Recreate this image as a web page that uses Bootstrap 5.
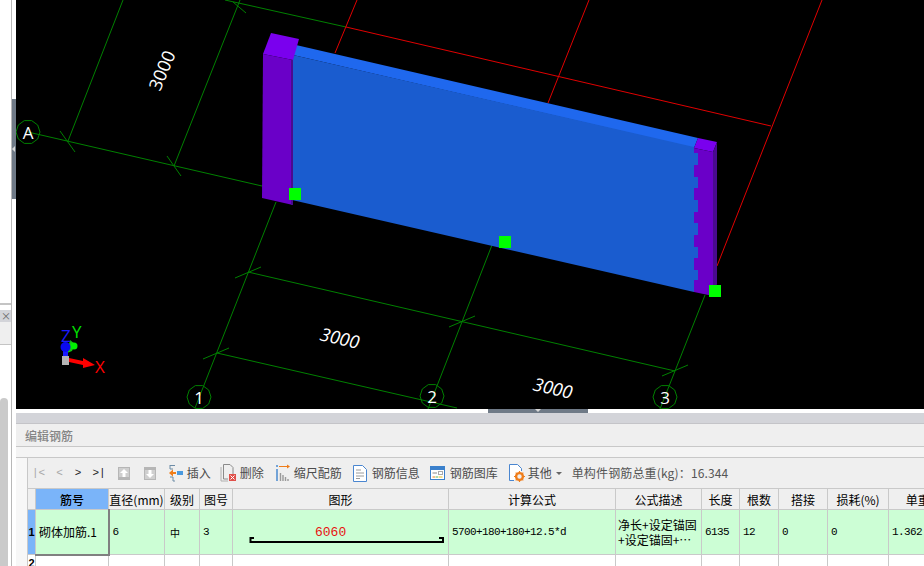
<!DOCTYPE html>
<html lang="zh">
<head>
  <meta charset="UTF-8">
  <title>编辑钢筋</title>
  <link href="https://cdn.jsdelivr.net/npm/bootstrap@5.3.0/dist/css/bootstrap.min.css" rel="stylesheet">
  <style>
    html, body { height: 100%; }
    body {
      width: 924px;
      height: 566px;
      overflow: hidden;
      background: #fff;
      font-family: "Noto Sans CJK SC", "Liberation Sans", sans-serif;
      font-size: 12px;
    }
    .app-shell { height: 566px; position: relative; }

    /* left dock */
    .dock { width: 16px; flex: 0 0 16px; }
    .dock-inner { width: 12px; height: 100%; border-right: 1px solid #b8b8b8; }
    .dock-top { height: 305px; border-bottom: 2px solid #c4c4c4; }
    .dock-tab { height: 35px; margin-top: 5px; background: #efefef; border-bottom: 1px solid #c4c4c4; }
    .dock-tab-head { height: 12px; background: #d3d4d9; color: #666; font-size: 10px; line-height: 12px; padding-left: 1px; }
    .dock-scroll { width: 8px; height: 168px; margin-top: 53px; background: #cacaca; border-radius: 4px 4px 0 0; }
    .grip-side {
      position: absolute; left: 12px; top: 99px; width: 4px; height: 100px;
      background: #6f7a87;
    }
    .grip-side::after {
      content: ""; position: absolute; left: 0; top: 47px;
      border: 3px solid transparent; border-left: 0; border-right-color: #d8d8d8;
    }
    .grip-bottom {
      position: absolute; left: 488px; top: 409px; width: 100px; height: 4px;
      background: #6f7a87;
    }
    .grip-bottom::after {
      content: ""; position: absolute; left: 47px; top: 0;
      border: 3px solid transparent; border-bottom: 0; border-top-color: #d8d8d8;
    }

    /* 3d view */
    .view3d { display: block; flex: none; width: 908px; height: 409px; background: #000; }
    .dim-text { fill: #fff; font-family: "Open Sans", sans-serif; font-size: 18px; font-style: italic; }
    .dim-upright { font-style: normal; }
    .axis-text { fill: #fff; font-family: "Open Sans", sans-serif; font-size: 17px; }
    .gizmo-text { font-family: "Open Sans", sans-serif; font-size: 17px; }

    /* bottom panel */
    .edit-panel { margin-top: 4px; background: #f7f7f7; overflow: hidden; flex: 1 1 auto; min-height: 0; }
    .panel-band { height: 11px; background: #d3d4d9; border-bottom: 1px solid #c4c4c8; }
    .panel-title {
      height: 23px; background: #efefef; border-bottom: 1px solid #c8c8c8;
      color: #858585; font-weight: 500; line-height: 23px; padding-left: 9px;
    }
    .panel-gap { height: 11px; background: #f4f4f4; border-bottom: 1px solid #c8c8c8; }
    .grid-box { margin-left: 11px; width: 941px; }

    .tool-row {
      height: 30px; background: #efefef; border-left: 1px solid #c8c8c8;
      color: #4c4c4c; white-space: nowrap;
    }
    .nav-glyph { font-family: "Liberation Mono", monospace; font-size: 11px; line-height: 1; }
    .nav-off { color: #a8a8a8; }
    .nav-on { color: #222; }
    .tool-icon { display: block; flex: none; }
    .tool-total { color: #555; letter-spacing: .15px; }
    .tool-caret { border: 3px solid transparent; border-bottom: 0; border-top-color: #666; }

    .table.rebar-grid {
      table-layout: fixed; width: 941px; margin: 0;
      --bs-table-bg: #fff; --bs-table-color: #000; --bs-border-color: #c9c9c9;
      font-size: 12px;
    }
    .table.rebar-grid th, .table.rebar-grid td {
      padding: 0 3px; vertical-align: middle; overflow: hidden; white-space: nowrap;
    }
    .table.rebar-grid th {
      --bs-table-bg: #efefef; --bs-table-color: #555;
      font-weight: 400; text-align: center; height: 21px; line-height: 19px; padding: 0;
    }
    .table.rebar-grid th.head-active { --bs-table-bg: #7ab4f9; --bs-table-color: #fff; font-weight: 500; }
    .rebar-row { --bs-table-bg: #ccfed5; }
    .rebar-row td { height: 45px; }
    .table.rebar-grid td.row-no {
      padding: 0; text-align: center; font-weight: 700; font-family: "Liberation Sans", sans-serif;
      font-size: 11px;
    }
    .rebar-row td.row-no { --bs-table-bg: #7ab4f9; --bs-table-color: #fff; }
    .table.rebar-grid td.cell-active { border-right: 2px solid #808080; border-bottom: 2px solid #808080; }
    .table.rebar-grid td.num { font-family: "Liberation Mono", monospace; font-size: 11px; letter-spacing: -.6px; }
    .table.rebar-grid td.grade { font-size: 10px; padding-left: 5px; }
    .table.rebar-grid td.desc { white-space: normal; line-height: 15px; padding: 0 0 0 2px; }
    .table.rebar-grid td.shape-cell { padding: 0; }
    .shape-svg { display: block; width: 215px; height: 44px; }
    .shape-num { fill: #e81010; font-family: "Liberation Mono", monospace; font-size: 13px; }
  </style>
</head>
<body>
  <div class="app-shell d-flex">
    <div class="dock">
      <div class="dock-inner">
        <div class="dock-top"></div>
        <div class="dock-tab"><div class="dock-tab-head">×</div></div>
        <div class="dock-scroll"></div>
      </div>
    </div>
    <div class="grip-side"></div>

    <div class="d-flex flex-column flex-grow-1" style="min-width:0">
      <!-- view uses page coordinates -->
      <svg class="view3d" viewBox="16 0 908 409" xmlns="http://www.w3.org/2000/svg">
        <defs>
          <polygon id="bubble" fill="none" stroke="#008000" points="12,0 9.7,7 3.7,11.4 -3.7,11.4 -9.7,7 -12,0 -9.7,-7 -3.7,-11.4 3.7,-11.4 9.7,-7"/>
        </defs>

        <!-- grid lines -->
        <g stroke="#008000" stroke-width="1" fill="none">
          <path d="M225 0L346 27"/>
          <path d="M244 -10L174 166M123 0L68 141"/>
          <path d="M233 2L246 13M60 131L75 152M167 156L181 176"/>
          <path d="M28 132L262 186"/>
          <path d="M276 202L195 408"/>
          <path d="M235 278L261 267M203 359L229 348M449 327L475 316M662 376L688 365"/>
          <path d="M248 272L675 371"/>
          <path d="M217 353L457 408"/>
          <path d="M492 245L428 409"/>
          <path d="M705 295L660 409"/>
          <use href="#bubble" transform="translate(28 132)"/>
          <use href="#bubble" transform="translate(199 397)"/>
          <use href="#bubble" transform="translate(432 396)"/>
          <use href="#bubble" transform="translate(665 397)"/>
        </g>
        <g stroke="#e00000" stroke-width="1" fill="none">
          <path d="M346 27L771 126"/>
          <path d="M357 0L335 53M589 0L548 103M822 0L717 266"/>
        </g>

        <!-- wall -->
        <polygon points="296,45 698,138 694,148 293,55" fill="#1f68ee"/>
        <polygon points="293,55 694,147 694,292 292,200" fill="#1a5ccf"/>
        <polygon points="263,54 271,33 299,39 293,60" fill="#7a00ee"/>
        <polygon points="263,54 293,60 293,205 262,198" fill="#6a00c8"/>
        <polygon points="291,60 293,60 293,205 291,205" fill="#4a0a90"/>
        <polygon points="698,138 717,142 713,152 694,148" fill="#7a00ee"/>
        <polygon points="713,152 717,142 717,284 713,296" fill="#4a0a90"/>
        <path d="M694 292V280H698V270H694V258H698V247H694V235H698V223H694V212H698V200H694V188H698V177H694V165H698V153H694V148L713 152V296Z" fill="#6a00c8"/>
        <path d="M694 153H698V165H694ZM694 177H698V188H694ZM694 200H698V212H694ZM694 223H698V235H694ZM694 247H698V258H694ZM694 270H698V280H694Z" fill="#1a5ccf"/>

        <!-- grip points -->
        <g fill="#00ff00">
          <rect x="289" y="188" width="12" height="12"/>
          <rect x="499" y="236" width="12" height="12"/>
          <rect x="709" y="285" width="12" height="12"/>
        </g>

        <!-- dimensions -->
        <text class="dim-text dim-upright" transform="translate(160 92) rotate(-67)">3000</text>
        <text class="dim-text" transform="translate(319 340) rotate(13)">3000</text>
        <text class="dim-text" transform="translate(532 390) rotate(13)">3000</text>
        <text class="axis-text" text-anchor="middle" x="28" y="139">A</text>
        <text class="axis-text" text-anchor="middle" x="199" y="404">1</text>
        <text class="axis-text" text-anchor="middle" x="432" y="403">2</text>
        <text class="axis-text" text-anchor="middle" x="665" y="404">3</text>

        <!-- axis gizmo -->
        <path d="M70 340L75 344L72 351L67 353Z" fill="#11c811"/>
        <circle cx="74" cy="346" r="3.5" fill="#00f000"/>
        <rect x="63" y="350" width="5" height="8" fill="#1a1aff"/>
        <circle cx="65.5" cy="347" r="5" fill="#0a0af0"/>
        <rect x="62" y="356" width="7" height="9" fill="#b4b4b4"/>
        <path d="M69 358L83 361L83 358L95 365L83 368L83 365L69 362Z" fill="#ff0000"/>
        <text class="gizmo-text" fill="#1a1aff" x="61" y="342">Z</text>
        <text class="gizmo-text" fill="#00e000" x="72" y="338">Y</text>
        <text class="gizmo-text" fill="#ff0000" x="95" y="373">X</text>
      </svg>

      <div class="edit-panel">
        <div class="panel-band"></div>
        <div class="panel-title">编辑钢筋</div>
        <div class="panel-gap"></div>
        <div class="grid-box">
          <div class="tool-row d-flex align-items-center">
            <span class="nav-glyph nav-off" style="margin-left:4px">|&lt;</span>
            <span class="nav-glyph nav-off" style="margin-left:11px">&lt;</span>
            <span class="nav-glyph nav-on" style="margin-left:12px">&gt;</span>
            <span class="nav-glyph nav-on" style="margin-left:11px">&gt;|</span>

            <svg class="tool-icon" style="margin-left:11px" width="14" height="15" viewBox="0 0 14 15">
              <rect x="1" y="1" width="12" height="13" fill="#b6b6b6"/><rect x="2" y="2" width="10" height="9" fill="#cfcfcf"/>
              <path d="M7 3L11 7H8.5V11H5.5V7H3Z" fill="#fff"/>
            </svg>
            <svg class="tool-icon" style="margin-left:12px" width="14" height="15" viewBox="0 0 14 15">
              <rect x="1" y="1" width="12" height="13" fill="#b6b6b6"/><rect x="2" y="4" width="10" height="9" fill="#cfcfcf"/>
              <path d="M7 12L11 8H8.5V4H5.5V8H3Z" fill="#fff"/>
            </svg>

            <svg class="tool-icon" style="margin-left:12px" width="15" height="18" viewBox="0 0 15 18">
              <path d="M1 1.5H6M1 1V5H4M1 13H4V17H6" fill="none" stroke="#6d8ca6"/>
              <path d="M0 9L4 5.5V8H7V10H4V12.5Z" fill="#ef7d1a"/>
              <rect x="8" y="7" width="6" height="4" fill="#4a9adf"/>
            </svg>
            <span style="margin-left:3px">插入</span>

            <svg class="tool-icon" style="margin-left:9px" width="16" height="18" viewBox="0 0 16 18">
              <path d="M3.5 .5H10L13 3.5V10M3.5 .5V15H8" fill="none" stroke="#8a8a8a"/>
              <path d="M1 3V17H8" fill="none" stroke="#b0b0b0"/>
              <rect x="9" y="10" width="7" height="7" fill="#e0504a"/>
              <path d="M10.5 11.5L14.5 15.5M14.5 11.5L10.5 15.5" stroke="#fff"/>
            </svg>
            <span style="margin-left:4px">删除</span>

            <svg class="tool-icon" style="margin-left:12px" width="15" height="18" viewBox="0 0 15 18">
              <path d="M3 2.5H12" stroke="#ef7d1a"/><path d="M11 .5L14 2.5L11 4.5Z" fill="#ef7d1a"/>
              <path d="M1 1V3M1 5V17" stroke="#4a8ad0" stroke-width="1.5"/>
              <path d="M4.5 9V17M7 11V17M9.5 13V17M12 15V17" stroke="#9a9a9a" stroke-width="1.4"/>
            </svg>
            <span style="margin-left:3px">缩尺配筋</span>

            <svg class="tool-icon" style="margin-left:11px" width="14" height="17" viewBox="0 0 14 17">
              <path d="M.5 .5H9.5L13.5 4.5V16.5H.5Z" fill="#fff" stroke="#4a86d0"/>
              <path d="M3 5H8M3 8H11M3 11H11M3 13.5H7" stroke="#9a9a9a"/>
            </svg>
            <span style="margin-left:5px">钢筋信息</span>

            <svg class="tool-icon" style="margin-left:10px" width="15" height="14" viewBox="0 0 15 14">
              <rect x=".5" y=".5" width="14" height="13" fill="#fff" stroke="#3a80cc"/>
              <rect x="1" y="1" width="13" height="3" fill="#3a80cc"/>
              <path d="M2.5 7H7" stroke="#888"/>
              <path d="M2.5 11H5" stroke="#ef7d1a"/><path d="M5.5 11H8" stroke="#5ab85a"/><path d="M8.5 11H12.5" stroke="#e8c020"/>
              <rect x="8.5" y="5.5" width="4" height="3" fill="none" stroke="#aaa"/>
            </svg>
            <span style="margin-left:5px">钢筋图库</span>

            <svg class="tool-icon" style="margin-left:11px" width="16" height="18" viewBox="0 0 16 18">
              <path d="M5 16.5H.5V.5H8.5L12.5 4.5V7" fill="#fff" stroke="#4a86d0"/>
              <circle cx="10.5" cy="12.5" r="3.4" fill="none" stroke="#ef7d1a" stroke-width="2.4"/>
              <path d="M10.5 7V18M5 12.5H16M6.7 8.7L14.3 16.3M14.3 8.7L6.7 16.3" stroke="#ef7d1a" stroke-width="1.2" stroke-dasharray="2 7"/>
            </svg>
            <span style="margin-left:3px">其他</span>
            <span class="tool-caret" style="margin-left:4px"></span>
            <span class="tool-total" style="margin-left:10px">单构件钢筋总重(kg)：16.344</span>
          </div>

          <table class="table table-bordered rebar-grid">
            <colgroup>
              <col style="width:8px"><col style="width:73px"><col style="width:56px"><col style="width:35px">
              <col style="width:33px"><col style="width:216px"><col style="width:167px"><col style="width:86px">
              <col style="width:38px"><col style="width:39px"><col style="width:49px"><col style="width:61px"><col style="width:80px">
            </colgroup>
            <thead>
              <tr>
                <th></th><th class="head-active">筋号</th><th>直径(mm)</th><th>级别</th><th>图号</th><th>图形</th>
                <th>计算公式</th><th>公式描述</th><th>长度</th><th>根数</th><th>搭接</th><th>损耗(%)</th><th>单重(kg)</th>
              </tr>
            </thead>
            <tbody>
              <tr class="rebar-row">
                <td class="row-no">1</td>
                <td class="cell-active">砌体加筋.1</td>
                <td class="num">6</td>
                <td class="grade">中</td>
                <td class="num">3</td>
                <td class="shape-cell">
                  <svg class="shape-svg" viewBox="0 0 215 44">
                    <text class="shape-num" x="82" y="26">6060</text>
                    <path d="M21 28H17.5V32H210V28H206" fill="none" stroke="#000" stroke-width="2"/>
                  </svg>
                </td>
                <td class="num">5700+180+180+12.5*d</td>
                <td class="desc">净长+设定锚固<br>+设定锚固+⋯</td>
                <td class="num">6135</td>
                <td class="num">12</td>
                <td class="num">0</td>
                <td class="num">0</td>
                <td class="num">1.362</td>
              </tr>
              <tr>
                <td class="row-no">2</td><td></td><td></td><td></td><td></td><td></td><td></td><td></td><td></td><td></td><td></td><td></td><td></td>
              </tr>
            </tbody>
          </table>
        </div>
      </div>
    </div>
    <div class="grip-bottom"></div>
  </div>

  <script src="https://cdn.jsdelivr.net/npm/bootstrap@5.3.0/dist/js/bootstrap.bundle.min.js"></script>
</body>
</html>
